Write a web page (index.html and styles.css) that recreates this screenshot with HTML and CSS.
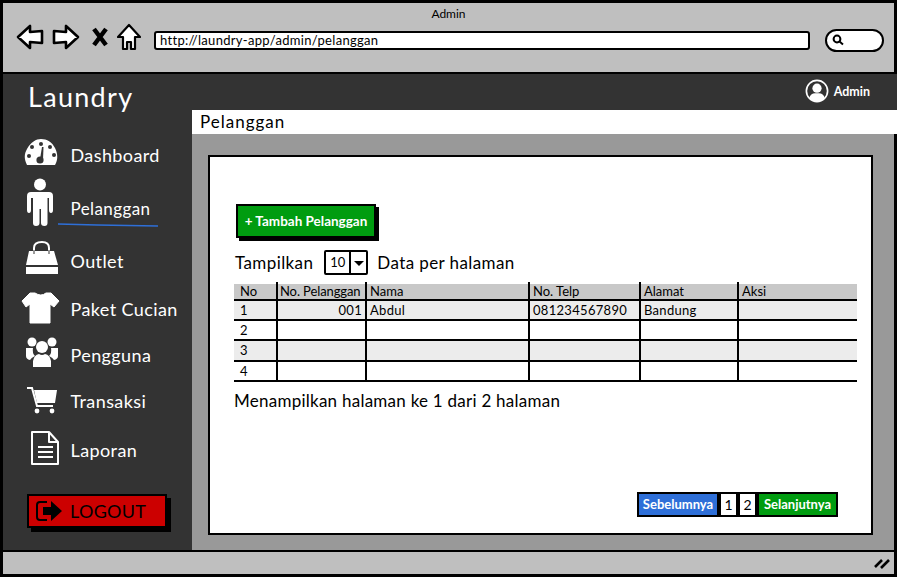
FILE: index.html
```html
<!DOCTYPE html>
<html lang="en">
<head>
    <meta charset="UTF-8">
    <title>Admin</title>
    <link rel="stylesheet" href="styles.css">
</head>
<body>
<div class="window">
    <div class="browser">
        <div class="browser_title">Admin</div>
        <div class="browser_tools">
            <svg class="tool_back" width="28" height="26" viewBox="0 0 28 26"><path d="M2 13 L14 2 L14 8 L26 7 L26 19 L14 18 L14 24 Z" fill="#fff" stroke="#000" stroke-width="2.6" stroke-linejoin="round"/></svg>
            <svg class="tool_forward" width="28" height="26" viewBox="0 0 28 26"><path d="M26 13 L14 2 L14 8 L2 7 L2 19 L14 18 L14 24 Z" fill="#fff" stroke="#000" stroke-width="2.6" stroke-linejoin="round"/></svg>
            <svg class="tool_stop" width="16" height="20" viewBox="0 0 16 20"><path d="M2 2 L14 18 M14 2 L2 18" fill="none" stroke="#000" stroke-width="4.5"/></svg>
            <svg class="tool_home" width="24" height="28" viewBox="0 0 24 28"><path d="M12 2 L23 14 L18 14 L18 26 L14 26 L14 19 L10 19 L10 26 L6 26 L6 14 L1 14 Z" fill="#fff" stroke="#000" stroke-width="2.2" stroke-linejoin="round"/></svg>
            <div class="address">http://laundry-app/admin/pelanggan</div>
            <div class="search">
                <svg width="12" height="12" viewBox="0 0 12 12"><circle cx="5" cy="5" r="3.4" fill="none" stroke="#000" stroke-width="2"/><path d="M7.5 7.5 L11 10.5" stroke="#000" stroke-width="2"/></svg>
            </div>
        </div>
    </div>
    <div class="app">
        <div class="sidebar">
            <div class="brand">Laundry</div>
            <div class="nav_item nav_dashboard">
                <svg class="nav_icon" width="40" height="40" viewBox="0 0 40 40"><path d="M7 30 C4 24 4 19 7 14 C11 7 16 4 21 4 C27 4 32 7 35 13 C38 19 38 25 35 30 Z" fill="#fff"/><g fill="#333"><circle cx="21" cy="9" r="2"/><circle cx="12" cy="12" r="2"/><circle cx="30" cy="12" r="2"/><circle cx="9" cy="21" r="2"/><circle cx="34" cy="20" r="2"/><circle cx="20" cy="25" r="3.6"/><path d="M20 24 L22 12 L23.5 12 L23 25 Z"/></g></svg>
                <span>Dashboard</span>
            </div>
            <div class="nav_item nav_pelanggan">
                <svg class="nav_icon icon_person" width="40" height="48" viewBox="0 0 40 48"><circle cx="20" cy="6.5" r="6" fill="#fff"/><path d="M11 14 L29 14 Q33 14 33 18 L33 32 Q33 35 31 35 Q29 35 29 32 L29 20 L27.5 20 L27.5 45 Q27.5 48 24.5 48 Q21 48 21 45 L21 31 L19.5 31 L19.5 45 Q19.5 48 16 48 Q13 48 13 45 L13 20 L11 20 L11 32 Q11 35 9 35 Q7 35 7 32 L7 18 Q7 14 11 14 Z" fill="#fff"/></svg>
                <span>Pelanggan</span>
                <svg class="nav_underline" width="102" height="4" viewBox="0 0 102 4"><path d="M1 1 L40 2 L101 3" fill="none" stroke="#2e6fd8" stroke-width="1.4"/></svg>
            </div>
            <div class="nav_item">
                <svg class="nav_icon" width="40" height="40" viewBox="0 0 40 40"><path d="M14 10 L14 7 Q14 1 22 1 Q29 1 29 7 L29 10" fill="none" stroke="#fff" stroke-width="2"/><path d="M9 10 L34 10 L38 24 L6 24 Z" fill="#fff"/><path d="M6 26 L38 26 L38 33 L6 33 Z" fill="#fff"/><path d="M14 9 L14 13 M29 9 L29 13" stroke="#999" stroke-width="2"/></svg>
                <span>Outlet</span>
            </div>
            <div class="nav_item">
                <svg class="nav_icon" width="40" height="40" viewBox="0 0 40 40"><path d="M10 4 L15 4 Q21 8 26 4 L31 4 L39 12 L34 18 L30 15 L30 34 L10 34 L10 15 L6 18 L2 12 Z" fill="#fff" stroke="#fff" stroke-linejoin="round"/></svg>
                <span>Paket Cucian</span>
            </div>
            <div class="nav_item nav_pengguna">
                <svg class="nav_icon" width="40" height="40" viewBox="0 0 40 40"><g fill="#fff"><circle cx="12" cy="7" r="4.5"/><circle cx="32" cy="7" r="4.5"/><circle cx="22" cy="12" r="6"/><path d="M6 13 L13 13 Q12 18 15 21 Q11 23 10 25 Q6 24 6 21 Z"/><path d="M38 13 L31 13 Q32 18 29 21 Q33 23 34 25 Q38 24 38 21 Z"/><path d="M13 32 L13 26 Q14 20 19 19 Q22 21 25 19 Q30 20 31 26 L31 32 Z"/></g></svg>
                <span>Pengguna</span>
            </div>
            <div class="nav_item">
                <svg class="nav_icon" width="40" height="40" viewBox="0 0 40 40"><path d="M7 7 L12 7 L17 25 L33 25" fill="none" stroke="#fff" stroke-width="2"/><path d="M14 9 L37 9 L35 22 L17 22 Z" fill="#fff"/><circle cx="17" cy="30" r="2.4" fill="#fff"/><circle cx="32" cy="30" r="2.4" fill="#fff"/></svg>
                <span>Transaksi</span>
            </div>
            <div class="nav_item nav_laporan">
                <svg class="nav_icon" width="40" height="40" viewBox="0 0 40 40"><path d="M12 2 L29 2 L38 12 L38 34 L12 34 Z M29 2 L29 12 L38 12" fill="none" stroke="#fff" stroke-width="2" stroke-linejoin="round"/><path d="M18 17 L33 17 M18 22 L33 22 M18 27 L33 27" stroke="#fff" stroke-width="2"/></svg>
                <span>Laporan</span>
            </div>
            <div class="logout">
                <svg width="30" height="26" viewBox="0 0 30 26"><path d="M12 4 L5 4 Q2 4 2 7 L2 19 Q2 22 5 22 L12 22" fill="none" stroke="#000" stroke-width="2"/><path d="M8 9 L16 9 L16 3 L27 13 L16 23 L16 17 L8 17 Z" fill="#000"/></svg>
                <span>LOGOUT</span>
            </div>
        </div>
        <div class="main">
            <div class="topbar">
                <svg width="24" height="24" viewBox="0 0 26 26"><circle cx="13" cy="13" r="11.5" fill="#333" stroke="#fff" stroke-width="1.8"/><circle cx="13" cy="10" r="5" fill="#fff"/><path d="M4.5 21 Q6 15.5 11 15.5 L15 15.5 Q20 15.5 21.5 21 Q13 28 4.5 21 Z" fill="#fff"/></svg>
                <span>Admin</span>
            </div>
            <div class="page_title">Pelanggan</div>
            <div class="content">
                <div class="card">
                    <div class="btn_add">+ Tambah Pelanggan</div>
                    <div class="length_row">
                        <span>Tampilkan</span>
                        <div class="length_select">
                            <div class="length_value">10</div>
                            <div class="length_arrow"></div>
                        </div>
                        <span>Data per halaman</span>
                    </div>
                    <table class="data_table">
                        <thead>
                            <tr>
                                <th class="col_no">No</th>
                                <th class="col_id">No. Pelanggan</th>
                                <th class="col_name">Nama</th>
                                <th class="col_phone">No. Telp</th>
                                <th class="col_address">Alamat</th>
                                <th>Aksi</th>
                            </tr>
                        </thead>
                        <tbody>
                            <tr><td>1</td><td class="num">001</td><td>Abdul</td><td>081234567890</td><td>Bandung</td><td></td></tr>
                            <tr><td>2</td><td></td><td></td><td></td><td></td><td></td></tr>
                            <tr><td>3</td><td></td><td></td><td></td><td></td><td></td></tr>
                            <tr><td>4</td><td></td><td></td><td></td><td></td><td></td></tr>
                        </tbody>
                    </table>
                    <div class="table_info">Menampilkan halaman ke 1 dari 2 halaman</div>
                    <div class="pager">
                        <div class="pager_btn pager_prev">Sebelumnya</div>
                        <div class="pager_btn pager_num">1</div>
                        <div class="pager_btn pager_num">2</div>
                        <div class="pager_btn pager_next">Selanjutnya</div>
                    </div>
                </div>
            </div>
        </div>
    </div>
    <div class="statusbar">
        <svg width="16" height="12" viewBox="0 0 16 12"><path d="M1 10 L8 3 M7 11 L15 3" fill="none" stroke="#000" stroke-width="2.6"/></svg>
    </div>
</div>
</body>
</html>
```

FILE: styles.css
```css
html, body {
    margin: 0;
    padding: 0;
}

body {
    font-family: "Lato", "Liberation Sans", sans-serif;
    color: #000;
    background-color: #fff;
}

.window {
    box-sizing: border-box;
    width: 897px;
    height: 577px;
    border: 3px solid #000;
    display: flex;
    flex-direction: column;
}

/* browser chrome */
.browser {
    height: 69px;
    background-color: #bfbfbf;
    border-bottom: 2px solid #000;
    flex: none;
}

.browser_title {
    height: 23px;
    line-height: 22px;
    text-align: center;
    font-size: 12px;
}

.browser_tools {
    display: flex;
    align-items: center;
    height: 28px;
    padding-left: 13px;
}

.browser_tools > svg {
    margin-bottom: 6px;
}

.tool_forward {
    margin-left: 8px;
}

.tool_stop {
    margin-left: 12px;
}

.tool_home {
    margin-left: 9px;
}

.address {
    box-sizing: border-box;
    width: 656px;
    height: 19px;
    margin-left: 13px;
    padding-left: 4px;
    line-height: 15px;
    font-size: 13px;
    letter-spacing: 0.3px;
    background-color: #fff;
    border: 2px solid #000;
    border-radius: 3px;
}

.search {
    box-sizing: border-box;
    width: 59px;
    height: 23px;
    margin-left: 15px;
    padding: 3px 0 0 5px;
    background-color: #fff;
    border: 2px solid #000;
    border-radius: 12px;
}

.search svg {
    display: block;
}

/* layout */
.app {
    flex: 1;
    display: flex;
    min-height: 0;
}

.sidebar {
    flex: none;
    width: 189px;
    background-color: #333;
    color: #fff;
}

.brand {
    height: 57px;
    padding-left: 25px;
    line-height: 46px;
    font-size: 27px;
    letter-spacing: 1.3px;
}

.nav_item {
    position: relative;
    display: flex;
    align-items: center;
    height: 48px;
    padding-left: 17px;
    font-size: 18px;
    letter-spacing: 0.4px;
}

.nav_item span {
    margin-left: 10.5px;
}

.nav_icon {
    flex: none;
}

.nav_pelanggan {
    height: 58px;
    font-size: 17px;
}

.icon_person {
    margin-bottom: 12px;
}

.nav_underline {
    position: absolute;
    left: 54px;
    top: 44px;
}

.nav_pengguna {
    height: 44px;
}

.nav_laporan {
    height: 50px;
}

.logout {
    box-sizing: border-box;
    display: flex;
    align-items: center;
    width: 140px;
    height: 34px;
    margin: 19px 0 0 24px;
    padding-left: 6px;
    background-color: #cc0000;
    border: 2px solid #000;
    box-shadow: 4px 4px 0 #000;
    color: #000;
    font-size: 18px;
    letter-spacing: 0.3px;
}

.logout span {
    margin-left: 5px;
}

.main {
    flex: 1;
    display: flex;
    flex-direction: column;
    min-width: 0;
}

.topbar {
    display: flex;
    align-items: center;
    justify-content: flex-end;
    height: 36px;
    margin-right: -3px;
    padding: 0 27px 2px 0;
    box-sizing: border-box;
    background-color: #333;
    color: #fff;
    font-size: 12.5px;
    font-weight: bold;
}

.topbar span {
    margin-left: 5px;
}

.page_title {
    height: 24px;
    margin-right: -3px;
    padding-left: 8px;
    line-height: 24px;
    font-size: 17px;
    letter-spacing: 1px;
    background-color: #fff;
}

.content {
    flex: 1;
    padding: 21px 21px 15px 16px;
    background-color: #999;
    display: flex;
}

/* card */
.card {
    box-sizing: border-box;
    flex: 1;
    position: relative;
    padding: 47px 14px 0 25px;
    background-color: #fff;
    border: 2px solid #000;
}

.btn_add {
    box-sizing: border-box;
    width: 140px;
    height: 34px;
    margin-left: 1px;
    line-height: 30px;
    text-align: center;
    font-size: 13.5px;
    font-weight: bold;
    color: #fff;
    background-color: #009c10;
    border: 2px solid #000;
    box-shadow: 3px 3px 0 #000;
}

.length_row {
    display: flex;
    align-items: center;
    height: 26px;
    margin-top: 11px;
    font-size: 17px;
    letter-spacing: 0.4px;
}

.length_select {
    box-sizing: border-box;
    display: flex;
    width: 44px;
    height: 25px;
    margin: 0 9px 0 11px;
    background-color: #fff;
    border: 2px solid #000;
    border-radius: 2px;
}

.length_value {
    width: 23px;
    border-right: 2px solid #000;
    line-height: 21px;
    text-align: center;
    font-size: 13px;
    letter-spacing: 0;
}

.length_arrow {
    width: 0;
    height: 0;
    margin: 9px 0 0 3px;
    border-left: 5px solid transparent;
    border-right: 5px solid transparent;
    border-top: 5px solid #000;
}

.data_table {
    width: 623px;
    margin: 9px 0 0 -1px;
    border-collapse: collapse;
    table-layout: fixed;
    font-size: 13px;
}

.data_table th {
    position: relative;
    height: 15px;
    padding: 0 3px;
    line-height: 15px;
    font-weight: normal;
    text-align: left;
    white-space: nowrap;
    background-color: #c8c8c8;
    border-left: 2px solid #000;
    border-bottom: 2px solid #000;
}

.data_table th + th::before {
    content: "";
    position: absolute;
    left: -2px;
    top: -2px;
    width: 2px;
    height: 2px;
    background-color: #000;
}

.data_table td {
    height: 18px;
    padding: 0 3px;
    border-left: 2px solid #000;
    border-bottom: 2px solid #000;
    letter-spacing: 0.3px;
}

.data_table tbody tr:nth-child(n+3) td {
    height: 18.5px;
}

.data_table th:first-child, .data_table td:first-child {
    border-left: none;
    padding-left: 6px;
}

.data_table tbody tr:nth-child(odd) {
    background-color: #ececec;
}

.data_table .num {
    text-align: right;
}

.data_table .col_id {
    padding: 0 1px 0 2px;
    letter-spacing: -0.1px;
}

.col_no {
    width: 33px;
}

.col_id {
    width: 84px;
}

.col_name {
    width: 155px;
}

.col_phone {
    width: 103px;
}

.col_address {
    width: 90px;
}

.table_info {
    margin: 8px 0 0 -1px;
    font-size: 17px;
    letter-spacing: 0.25px;
}

.pager {
    position: absolute;
    right: 33px;
    bottom: 16px;
    display: flex;
    font-size: 13px;
    font-weight: bold;
}

.pager_btn {
    box-sizing: border-box;
    height: 25px;
    line-height: 21px;
    text-align: center;
    border: 2px solid #000;
}

.pager_prev {
    width: 82px;
    color: #fff;
    background-color: #2e6fd8;
}

.pager_num {
    width: 19px;
    font-weight: normal;
    font-size: 14px;
    background-color: #fff;
}

.pager_next {
    width: 81px;
    color: #fff;
    background-color: #009c10;
}

/* bottom bar */
.statusbar {
    flex: none;
    height: 22px;
    display: flex;
    align-items: center;
    justify-content: flex-end;
    padding-right: 4px;
    background-color: #bfbfbf;
    border-top: 2px solid #000;
}
```
